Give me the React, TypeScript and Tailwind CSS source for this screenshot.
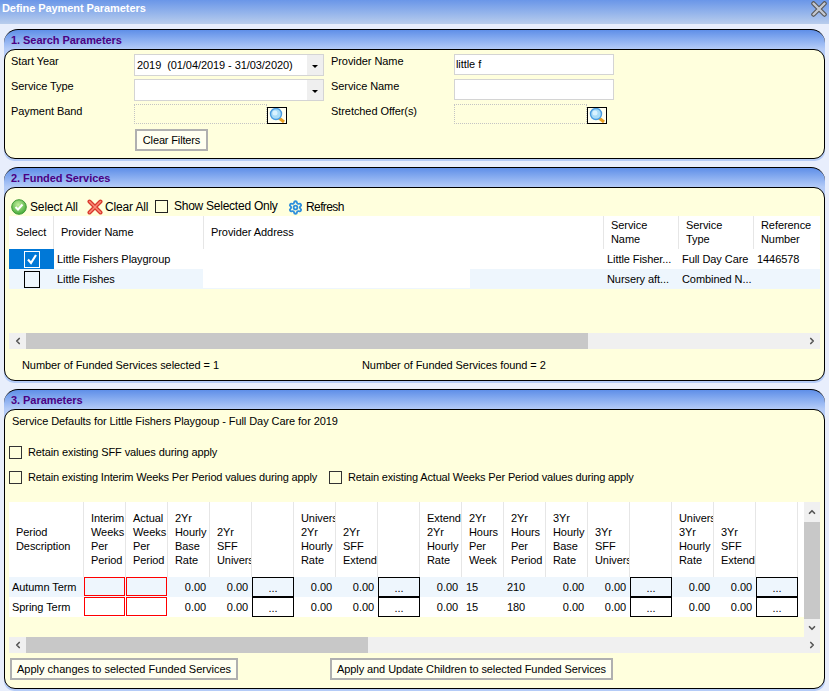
import { ReactNode } from "react";
import { ChevronDown, ChevronLeft, ChevronRight, ChevronUp, Settings } from "lucide-react";

const Panel = ({ title, bodyClass, children }: { title: string; bodyClass: string; children: ReactNode }) => (
  <section className="mx-[4px] rounded-t-[14px] rounded-b-[10px] border-t border-black bg-gradient-to-b from-[#5f8fe8] from-0% to-[#b4cbf7] to-[19px] pb-[2px]">
    <h2 className="h-[19px] pl-[7px] text-[11px] font-bold leading-[20px] tracking-[-0.05px] text-[#4b0082]">{title}</h2>
    <div className={`rounded-[11px] border border-black bg-[#ffffdd] px-[4px] ${bodyClass}`}>{children}</div>
  </section>
);

const Magnifier = () => (
  <span className="flex h-[17px] w-[20px] shrink-0 items-center justify-center border border-black bg-[#fffff0]">
    <svg width="17" height="15" viewBox="0 0 17 15">
      <line x1="10" y1="10" x2="15" y2="14" stroke="#e8a020" strokeWidth="3" />
      <circle cx="7" cy="6" r="5.5" fill="#a8dcf8" stroke="#4a9ce0" strokeWidth="1.4" />
      <circle cx="6" cy="5" r="2.5" fill="#d8f2ff" />
    </svg>
  </span>
);

const Select = ({ value }: { value?: string }) => (
  <div className="flex h-[22px] w-[190px] border border-[#d4d4d4] bg-white">
    <span className="flex-1 whitespace-pre pl-[2px] text-[11px] leading-[20px]">{value}</span>
    <span className="flex w-[16px] items-center justify-center bg-[#efefef]">
      <span className="mt-[2px] h-0 w-0 border-x-[3px] border-t-[3px] border-x-transparent border-t-black" />
    </span>
  </div>
);

const Lookup = () => (
  <div className="flex h-[20px] items-start">
    <div className="h-[20px] w-[133px] border border-dotted border-[#c4c4c4]" />
    <div className="mt-[3px]">
      <Magnifier />
    </div>
  </div>
);

const Button = ({ label, className }: { label: string; className: string }) => (
  <button className={`h-[22px] whitespace-nowrap border-2 border-[#b0b0b0] bg-[#fffff0] text-[11px] text-black ${className}`}>
    {label}
  </button>
);

const Checkbox = ({ className }: { className: string }) => <span className={`inline-block shrink-0 border bg-transparent ${className}`} />;

const HScroll = ({ thumb }: { thumb: string }) => (
  <div className="flex h-[16px] items-center bg-[#f0f0f0]">
    <span className="flex w-[17px] justify-center">
      <ChevronLeft size={10} strokeWidth={4} className="text-[#555]" />
    </span>
    <span className={`h-full bg-[#c8c8c8] ${thumb}`} />
    <span className="ml-auto flex w-[17px] justify-center">
      <ChevronRight size={10} strokeWidth={4} className="text-[#555]" />
    </span>
  </div>
);

const serviceCols = "grid-cols-[45px_150px_400px_75px_75px_66px]";

const HeadCell = ({ children }: { children?: ReactNode }) => (
  <div className="flex items-center overflow-hidden whitespace-pre-line border-r border-[#e6e6e6] pb-[1px] pl-[7px] leading-[14px]">
    <span>{children}</span>
  </div>
);

const paramHeads = [
  "Interim\nWeeks\nPer\nPeriod",
  "Actual\nWeeks\nPer\nPeriod",
  "2Yr\nHourly\nBase\nRate",
  "2Yr\nSFF\nUniversal",
  "",
  "Universal\n2Yr\nHourly\nRate",
  "2Yr\nSFF\nExtended",
  "",
  "Extended\n2Yr\nHourly\nRate",
  "2Yr\nHours\nPer\nWeek",
  "2Yr\nHours\nPer\nPeriod",
  "3Yr\nHourly\nBase\nRate",
  "3Yr\nSFF\nUniversal",
  "",
  "Universal\n3Yr\nHourly\nRate",
  "3Yr\nSFF\nExtended",
  "",
];

const Amount = () => <div className="pr-[4px] text-right leading-[20px]">0.00</div>;
const Red = () => <div className="mr-[1px] h-[19px] border border-[#ff0000]" />;
const More = () => (
  <div className="h-[20px] border border-black text-center leading-[20px]">...</div>
);

const ParamRow = ({ name, perPeriod, rowClass }: { name: string; perPeriod: string; rowClass: string }) => (
  <>
    <div className={`pl-[3px] leading-[20px] ${rowClass}`}>{name}</div>
    {[Red, Red, Amount, Amount, More, Amount, Amount, More, Amount].map((Cell, i) => (
      <div key={i} className={rowClass}>
        <Cell />
      </div>
    ))}
    <div className={`pl-[4px] leading-[20px] ${rowClass}`}>15</div>
    <div className={`pl-[3px] leading-[20px] ${rowClass}`}>{perPeriod}</div>
    {[Amount, Amount, More, Amount, Amount, More].map((Cell, i) => (
      <div key={i} className={rowClass}>
        <Cell />
      </div>
    ))}
    <div className="bg-white" />
  </>
);

export default function App() {
  return (
    <div className="h-[691px] w-[829px] overflow-hidden bg-[#e8eefc] font-['Liberation_Sans',Arial,sans-serif] text-[11px] tracking-[-0.07px] text-black">
      <header className="flex h-[24px] items-center justify-between bg-gradient-to-b from-[#6a96e8] to-[#b9cdec] pl-[2px] pr-[2px]">
        <h1 className="pb-[8px] text-[11px] font-bold text-white">Define Payment Parameters</h1>
        <svg width="16" height="16" viewBox="0 0 16 16" className="mb-[7px]">
          <path d="M2.5 2.5 13.5 13.5M13.5 2.5 2.5 13.5" stroke="#555" strokeWidth="4.5" strokeLinecap="round" />
          <path d="M2.5 2.5 13.5 13.5M13.5 2.5 2.5 13.5" stroke="#c4c8d0" strokeWidth="2.4" strokeLinecap="round" />
        </svg>
      </header>

      <div className="flex flex-col gap-[6px] pt-[5px]">
        <Panel title="1. Search Parameters" bodyClass="h-[110px]">
          <div className="grid grid-cols-[123px_197px_123px_1fr] grid-rows-[22px_22px_20px] gap-y-[3px] pl-[2px] pt-[4px]">
            <span className="leading-[15px]">Start Year</span>
            <Select value="2019  (01/04/2019 - 31/03/2020)" />
            <span className="leading-[15px]">Provider Name</span>
            <input readOnly value="little f" className="h-[21px] w-[160px] border border-[#d4d4d4] bg-white px-[1px] pb-[2px] text-[11px] outline-none" />
            <span className="leading-[15px]">Service Type</span>
            <Select />
            <span className="leading-[15px]">Service Name</span>
            <input readOnly className="h-[21px] w-[160px] border border-[#d4d4d4] bg-white outline-none" />
            <span className="leading-[15px]">Payment Band</span>
            <Lookup />
            <span className="leading-[15px]">Stretched Offer(s)</span>
            <Lookup />
          </div>
          <div className="mt-[5px] pl-[126px]">
            <Button label="Clear Filters" className="w-[73px] tracking-[-0.15px]" />
          </div>
        </Panel>

        <Panel title="2. Funded Services" bodyClass="h-[194px]">
          <div className="flex h-[28px] items-end text-[12px] tracking-[-0.15px]">
            <svg width="16" height="16" viewBox="0 0 16 16" className="mb-[1px] ml-[2px]">
              <defs>
                <radialGradient id="tick" cx="45%" cy="35%" r="70%">
                  <stop offset="0%" stopColor="#c4ee9c" />
                  <stop offset="100%" stopColor="#3aa632" />
                </radialGradient>
              </defs>
              <circle cx="8" cy="8" r="7.3" fill="url(#tick)" stroke="#3f9a34" />
              <path d="M4.5 8 7 10.5 11.5 5.5" fill="none" stroke="#fff" strokeWidth="2" />
            </svg>
            <span className="ml-[3px] w-[57px]">Select All</span>
            <svg width="16" height="16" viewBox="0 0 16 16" className="mb-[1px]">
              <path d="M2.5 2.5 13.5 13.5M13.5 2.5 2.5 13.5" stroke="#d8382c" strokeWidth="4" strokeLinecap="round" />
              <path d="M2.5 2.5 13.5 13.5M13.5 2.5 2.5 13.5" stroke="#fa8a78" strokeWidth="1.5" strokeLinecap="round" />
            </svg>
            <span className="ml-[2px] w-[50px]">Clear All</span>
            <Checkbox className="mb-[3px] h-[13px] w-[13px] border-[#222]" />
            <span className="mb-[1px] ml-[6px] w-[114px] tracking-[-0.25px]">Show Selected Only</span>
            <Settings size={15} strokeWidth={3} className="mb-[1px] text-[#2f8fdc]" />
            <span className="ml-[3px] tracking-[-0.6px]">Refresh</span>
          </div>

          <div className={`grid h-[33px] bg-white ${serviceCols}`}>
            <HeadCell>Select</HeadCell>
            <HeadCell>Provider Name</HeadCell>
            <HeadCell>Provider Address</HeadCell>
            <HeadCell>{"Service\nName"}</HeadCell>
            <HeadCell>{"Service\nType"}</HeadCell>
            <div className="flex items-center whitespace-pre-line pb-[1px] pl-[7px] leading-[14px]">{"Reference\nNumber"}</div>
          </div>
          <div className={`grid h-[20px] whitespace-nowrap bg-white leading-[20px] ${serviceCols}`}>
            <div className="flex items-center justify-center bg-[#0078d7]">
              <span className="flex h-[17px] w-[16px] items-center justify-center border border-white">
                <svg width="12" height="12" viewBox="0 0 12 12">
                  <path d="M2 6.5 5 10 10 2" fill="none" stroke="#fff" strokeWidth="2.2" />
                </svg>
              </span>
            </div>
            <div className="pl-[3px]">Little Fishers Playgroup</div>
            <div />
            <div className="pl-[3px]">Little Fisher...</div>
            <div className="pl-[3px]">Full Day Care</div>
            <div className="pl-[3px]">1446578</div>
          </div>
          <div className={`grid h-[20px] whitespace-nowrap bg-[#eef6fd] leading-[20px] ${serviceCols}`}>
            <div className="flex items-center justify-center">
              <Checkbox className="h-[17px] w-[16px] border-black" />
            </div>
            <div className="pl-[3px]">Little Fishes</div>
            <div className="-ml-[1px] h-[19px] w-[267px] bg-white" />
            <div className="pl-[3px]">Nursery aft...</div>
            <div className="pl-[3px]">Combined N...</div>
            <div />
          </div>

          <div className="h-[44px]" />
          <HScroll thumb="w-[562px]" />
          <div className="flex h-[30px] items-center pt-[2px]">
            <span className="ml-[13px] w-[340px]">Number of Funded Services selected = 1</span>
            <span>Number of Funded Services found = 2</span>
          </div>
        </Panel>

        <Panel title="3. Parameters" bodyClass="h-[280px]">
          <div className="flex h-[23px] items-center pl-[3px]">Service Defaults for Little Fishers Playgoup - Full Day Care for 2019</div>
          <div className="mt-[13px] flex h-[13px] items-center gap-[6px] tracking-[-0.12px]">
            <Checkbox className="h-[13px] w-[13px] border-[#333]" />
            <span>Retain existing SFF values during apply</span>
          </div>
          <div className="mt-[12px] flex h-[13px] items-center gap-[6px] whitespace-nowrap tracking-[-0.15px]">
            <Checkbox className="h-[13px] w-[13px] border-[#333]" />
            <span className="w-[295px]">Retain existing Interim Weeks Per Period values during apply</span>
            <Checkbox className="h-[13px] w-[13px] border-[#333]" />
            <span>Retain existing Actual Weeks Per Period values during apply</span>
          </div>

          <div className="mt-[18px] flex h-[135px]">
            <div className="w-[795px]">
              <div className="grid grid-cols-[75px_repeat(17,42px)_6px] grid-rows-[75px_20px_20px]">
                <div className="flex items-center whitespace-pre-line border-r border-[#e6e6e6] bg-white pb-[2px] pl-[7px] leading-[14px]">
                  {"Period\nDescription"}
                </div>
                {paramHeads.map((head, i) => (
                  <div key={i} className="flex items-end overflow-hidden whitespace-pre border-r border-[#e6e6e6] bg-white pb-[10px] pl-[7px] leading-[14px]">
                    <span>{head}</span>
                  </div>
                ))}
                <div className="bg-white" />
                <ParamRow name="Autumn Term" perPeriod="210" rowClass="bg-[#eef6fd]" />
                <ParamRow name="Spring Term" perPeriod="180" rowClass="bg-white" />
              </div>
            </div>
            <div className="flex w-[16px] flex-col items-center bg-[#f0f0f0]">
              <span className="flex h-[20px] items-center">
                <ChevronUp size={10} strokeWidth={4} className="text-[#555]" />
              </span>
              <span className="w-full flex-1 bg-[#c8c8c8]" />
              <span className="flex h-[18px] items-center">
                <ChevronDown size={10} strokeWidth={4} className="text-[#555]" />
              </span>
            </div>
          </div>
          <HScroll thumb="w-[342px]" />
          <div className="mt-[5px] flex gap-[92px] pl-[1px]">
            <Button label="Apply changes to selected Funded Services" className="w-[228px] tracking-normal" />
            <Button label="Apply and Update Children to selected Funded Services" className="w-[283px] tracking-[-0.08px]" />
          </div>
        </Panel>
      </div>
    </div>
  );
}
